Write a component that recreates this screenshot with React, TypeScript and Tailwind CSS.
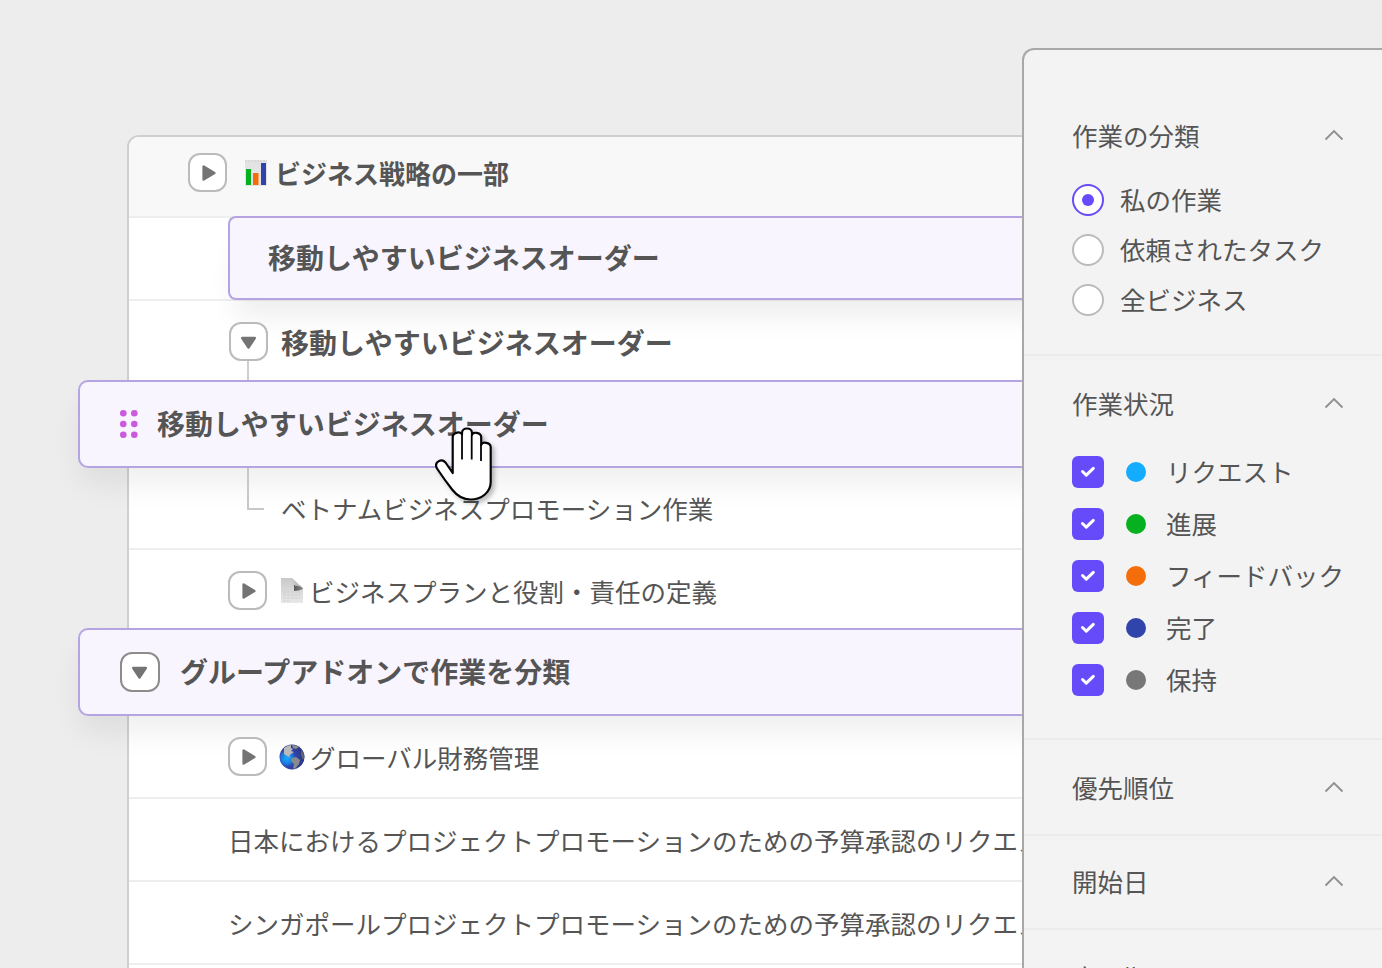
import type { ReactNode } from 'react';

type Status = { label: string; dot: string };

const statuses: Status[] = [
  { label: 'リクエスト', dot: 'bg-[#14acff]' },
  { label: '進展', dot: 'bg-[#06b01e]' },
  { label: 'フィードバック', dot: 'bg-[#f46d0b]' },
  { label: '完了', dot: 'bg-[#3044ac]' },
  { label: '保持', dot: 'bg-[#777777]' },
];

const scopes = ['私の作業', '依頼されたタスク', '全ビジネス'];

function Toggle({ open = false, strong = false }: { open?: boolean; strong?: boolean }) {
  return (
    <span
      className={
        strong
          ? 'flex size-10 shrink-0 items-center justify-center rounded-[12px] border-2 border-[#8c8c8c] bg-white'
          : 'flex size-[39px] shrink-0 items-center justify-center rounded-[12px] border-2 border-[#bbbbbb] bg-white'
      }
    >
      {open ? (
        <svg width="17" height="14" viewBox="0 0 17 14" className="mt-0.5 mr-px">
          <path
            d="M2.2 2 L14.8 2 L8.5 11.6 Z"
            fill="#747474"
            stroke="#747474"
            strokeWidth="2.4"
            strokeLinejoin="round"
          />
        </svg>
      ) : (
        <svg width="16" height="18" viewBox="0 0 16 18" className="ml-0.5">
          <path
            d="M2.6 2.4 L13.4 9 L2.6 15.6 Z"
            fill="#747474"
            stroke="#747474"
            strokeWidth="2.4"
            strokeLinejoin="round"
          />
        </svg>
      )}
    </span>
  );
}

function ChartIcon() {
  return (
    <svg width="24" height="28" viewBox="0 0 24 28" className="shrink-0">
      <path d="M1 1H23V27H1Z" fill="#e3e3e3" />
      <path d="M1 2H23" stroke="#cfcfcf" strokeDasharray="2 1" />
      <path d="M2 10H7V26H2Z" fill="#06b01e" />
      <path d="M9 14H14.5V26H9Z" fill="#f46d0b" />
      <path d="M17 4H22V26H17Z" fill="#3044ac" />
    </svg>
  );
}

function PageIcon() {
  return (
    <svg width="24" height="28" viewBox="0 0 24 28" className="shrink-0">
      <defs>
        <linearGradient id="sheet" x1="0" y1="0" x2="0" y2="1">
          <stop offset="0" stopColor="#c9c9c9" />
          <stop offset="1" stopColor="#e8e8e8" />
        </linearGradient>
        <linearGradient id="fold" x1="0" y1="0" x2="1" y2="0">
          <stop offset="0" stopColor="#4d4d4d" />
          <stop offset="1" stopColor="#858585" />
        </linearGradient>
      </defs>
      <path d="M1 1H12L23 11V26H1Z" fill="url(#sheet)" />
      <path d="M11 1Q14 4 14 8Q20 7 23 12Q19 14 14 14L14 9Q14 4 11 1Z" fill="url(#fold)" />
      <path d="M12 1L23 12Q19 8 15 9Q16 4 12 1Z" fill="#bdbdbd" />
      <path d="M3 15H20M3 18H20M3 21H20M3 24H9" stroke="#d0d0d0" strokeDasharray="3 1" />
    </svg>
  );
}

function GlobeIcon() {
  return (
    <svg width="26" height="26" viewBox="0 0 26 26" className="shrink-0">
      <defs>
        <radialGradient id="sea" cx="0.3" cy="0.55" r="0.7">
          <stop offset="0" stopColor="#14acff" />
          <stop offset="0.3" stopColor="#1c7fe0" />
          <stop offset="0.5" stopColor="#3044ac" />
          <stop offset="1" stopColor="#2a3580" />
        </radialGradient>
      </defs>
      <circle cx="13" cy="13" r="12.5" fill="url(#sea)" />
      <path d="M5 4Q9 1 12 1L12 4L14 5L12 7L15 8L12 10L10 12L12 14L8 12L5 10Z" fill="#b9b9b9" />
      <path d="M13 1Q17 1 20 3L17 5L14 4Z" fill="#8f8f8f" />
      <path d="M13 14L17 13L21 16L20 20L16 25L14 24L15 20L12 17Z" fill="#8a8a8a" />
      <path d="M22 6Q25 9 25.5 13L24 16L22 11Z" fill="#666666" />
    </svg>
  );
}

function Row({ children, className }: { children?: ReactNode; className?: string }) {
  return (
    <div className={`flex h-[83px] shrink-0 items-center border-b-2 border-[#eeeeee] ${className ?? ''}`}>
      {children}
    </div>
  );
}

function DragDots() {
  return (
    <svg width="18" height="28" viewBox="0 0 18 28" fill="#c95bdc" className="shrink-0">
      <circle cx="3.3" cy="3.3" r="3.3" />
      <circle cx="14.3" cy="3.3" r="3.3" />
      <circle cx="3.3" cy="14" r="3.3" />
      <circle cx="14.3" cy="14" r="3.3" />
      <circle cx="3.3" cy="24.7" r="3.3" />
      <circle cx="14.3" cy="24.7" r="3.3" />
    </svg>
  );
}

function HandCursor() {
  return (
    <svg
      width="70"
      height="88"
      viewBox="0 0 70 88"
      className="absolute left-[430px] top-[420px] z-20 drop-shadow-[3px_3px_2px_rgba(0,0,0,0.25)]"
    >
      <path
        d="M22.7 53 V17 C22.7 12 31.5 11 32 14.5 V13 C32 7 42 7 42 13 V15 C42 11.5 51 12 51.2 17 V25 C52 21.5 60.5 22 60.7 27 V62 C60.7 72 52 79.5 40.5 79.5 C32 79.5 26.5 75 22.5 70 C17 63 12 56 7 48.5 C3.5 42 11.5 38 15.5 42.5 Z"
        fill="#ffffff"
        stroke="#050505"
        strokeWidth="2.2"
        strokeLinejoin="round"
      />
      <path d="M32 14V39.5M41.7 15V39.5M51 24V41" fill="none" stroke="#050505" strokeWidth="1.8" />
    </svg>
  );
}

function SectionTitle({ title }: { title: string }) {
  return (
    <div className="flex h-8 items-center justify-between">
      <h2 className="-mt-0.5">{title}</h2>
      <svg width="20" height="12" viewBox="0 0 20 12" fill="none" className="-mt-0.5 mr-[38px]">
        <path d="M1.5 10.5 L10 2 L18.5 10.5" stroke="#909090" strokeWidth="1.9" />
      </svg>
    </div>
  );
}

function TaskList() {
  return (
    <section className="mt-[135px] ml-[127px] flex w-[895px] shrink-0 flex-col rounded-tl-[12px] border-t-2 border-l-2 border-[#cfcfcf] bg-white">
      <div className="flex h-[81px] shrink-0 items-center rounded-tl-[10px] border-b-2 border-[#eeeeee] bg-[#f8f8f8] pb-2 pl-[59px] text-[26px] font-bold">
        <Toggle />
        <span className="ml-[17px] flex">
          <ChartIcon />
        </span>
        <span className="ml-[7px]">ビジネス戦略の一部</span>
      </div>

      <Row>
        <div className="relative -mt-[2px] -mr-14 -mb-px ml-[99px] flex h-[84px] flex-1 items-center rounded-l-[8px] border-2 border-r-0 border-[#b5a3e2] bg-[#f8f5ff] pb-[3px] pl-[38px] text-[28px] font-bold shadow-[0_24px_28px_-8px_rgba(0,0,0,0.07)]">
          移動しやすいビジネスオーダー
        </div>
      </Row>

      <Row className="border-transparent pl-[100px] text-[28px] font-bold">
        <span className="relative z-[1] flex flex-col items-center">
          <Toggle open />
          <span className="absolute top-[39px] left-[18px] h-[22px] w-0.5 bg-[#cfcfcf]" />
        </span>
        <span className="relative z-[1] ml-[13px]">移動しやすいビジネスオーダー</span>
      </Row>

      <Row className="border-none">
        <div className="relative z-[2] -mt-[3px] -mr-14 -ml-[51px] flex h-[88px] flex-1 shrink-0 items-center rounded-l-[10px] border-2 border-r-0 border-[#b5a3e2] bg-[#f8f5ff] pl-10 text-[28px] font-bold shadow-[0_18px_30px_-2px_rgba(0,0,0,0.065)]">
          <DragDots />
          <span className="-mt-[3px] ml-[19px]">移動しやすいビジネスオーダー</span>
        </div>
      </Row>

      <Row className="pl-[118px]">
        <span className="relative z-[3] -mt-[38px] h-[42px] w-[17px] border-b-2 border-l-2 border-[#c8c8c8]" />
        <span className="relative z-[3] ml-[17px]">ベトナムビジネスプロモーション作業</span>
      </Row>

      <Row className="border-transparent pl-[99px]">
        <Toggle />
        <span className="ml-[13px] flex">
          <PageIcon />
        </span>
        <span className="ml-[5px]">ビジネスプランと役割・責任の定義</span>
      </Row>

      <Row className="border-none">
        <div className="relative z-[2] -mt-[5px] -mr-14 -ml-[51px] flex h-[88px] flex-1 shrink-0 items-center rounded-l-[10px] border-2 border-r-0 border-[#b5a3e2] bg-[#f8f5ff] pl-[40px] text-[28px] font-bold shadow-[0_18px_30px_-2px_rgba(0,0,0,0.065)]">
          <Toggle open strong />
          <span className="-mt-[3px] ml-[20px]">グループアドオンで作業を分類</span>
        </div>
      </Row>

      <Row className="pl-[99px]">
        <span className="relative z-[3] flex items-center">
          <Toggle />
          <span className="ml-[12px] flex">
            <GlobeIcon />
          </span>
          <span className="ml-[5px]">グローバル財務管理</span>
        </span>
      </Row>

      <Row className="-mr-14 pl-[99px] whitespace-nowrap">
        日本におけるプロジェクトプロモーションのための予算承認のリクエスト
      </Row>
      <Row className="-mr-14 pl-[99px] whitespace-nowrap">
        シンガポールプロジェクトプロモーションのための予算承認のリクエスト
      </Row>
      <Row />
    </section>
  );
}

function FilterPanel() {
  return (
    <aside className="z-10 mt-12 flex flex-1 flex-col rounded-tl-[12px] border-t-2 border-l-2 border-[#a8a8a8] bg-[#f3f3f3]">
      <div className="h-[306px] shrink-0 border-b-2 border-[#ececec] pt-[70px] pl-12">
        <SectionTitle title="作業の分類" />
        <ul className="mt-8 flex flex-col gap-[18px]">
          {scopes.map((scope, i) => (
            <li key={scope} className="flex h-8 items-center gap-4">
              <span
                className={
                  i === 0
                    ? 'flex size-8 items-center justify-center rounded-full border-2 border-[#664bfb] bg-white'
                    : 'size-8 rounded-full border-2 border-[#bbbbbb] bg-white'
                }
              >
                {i === 0 && <span className="size-3 rounded-full bg-[#664bfb]" />}
              </span>
              <span className="-mt-0.5">{scope}</span>
            </li>
          ))}
        </ul>
      </div>

      <div className="h-[384px] shrink-0 border-b-2 border-[#ececec] pt-8 pl-12">
        <SectionTitle title="作業状況" />
        <ul className="mt-9 flex flex-col gap-5">
          {statuses.map((status) => (
            <li key={status.label} className="flex h-8 items-center">
              <span className="flex size-8 items-center justify-center rounded-[6px] bg-[#664bfb]">
                <svg width="16" height="12" viewBox="0 0 16 12" fill="none">
                  <path
                    d="M2.5 5.5 L6.3 9.2 L13.3 2.4"
                    stroke="#ffffff"
                    strokeWidth="3"
                    strokeLinecap="round"
                    strokeLinejoin="round"
                  />
                </svg>
              </span>
              <span className={`ml-[22px] size-5 rounded-full ${status.dot}`} />
              <span className="-mt-0.5 ml-5">{status.label}</span>
            </li>
          ))}
        </ul>
      </div>

      <div className="h-24 shrink-0 border-b-2 border-[#ececec] pt-8 pl-12">
        <SectionTitle title="優先順位" />
      </div>
      <div className="h-[94px] shrink-0 border-b-2 border-[#ececec] pt-[30px] pl-12">
        <SectionTitle title="開始日" />
      </div>
      <div className="h-[94px] shrink-0 pt-8 pl-12">
        <SectionTitle title="完了期" />
      </div>
    </aside>
  );
}

export default function App() {
  return (
    <main
      lang="ja"
      className="relative flex h-[968px] w-[1382px] overflow-hidden bg-[#ededed] font-['Noto_Sans_CJK_JP',sans-serif] text-[25.5px] leading-none text-[#555555]"
    >
      <TaskList />
      <FilterPanel />
      <HandCursor />
    </main>
  );
}
